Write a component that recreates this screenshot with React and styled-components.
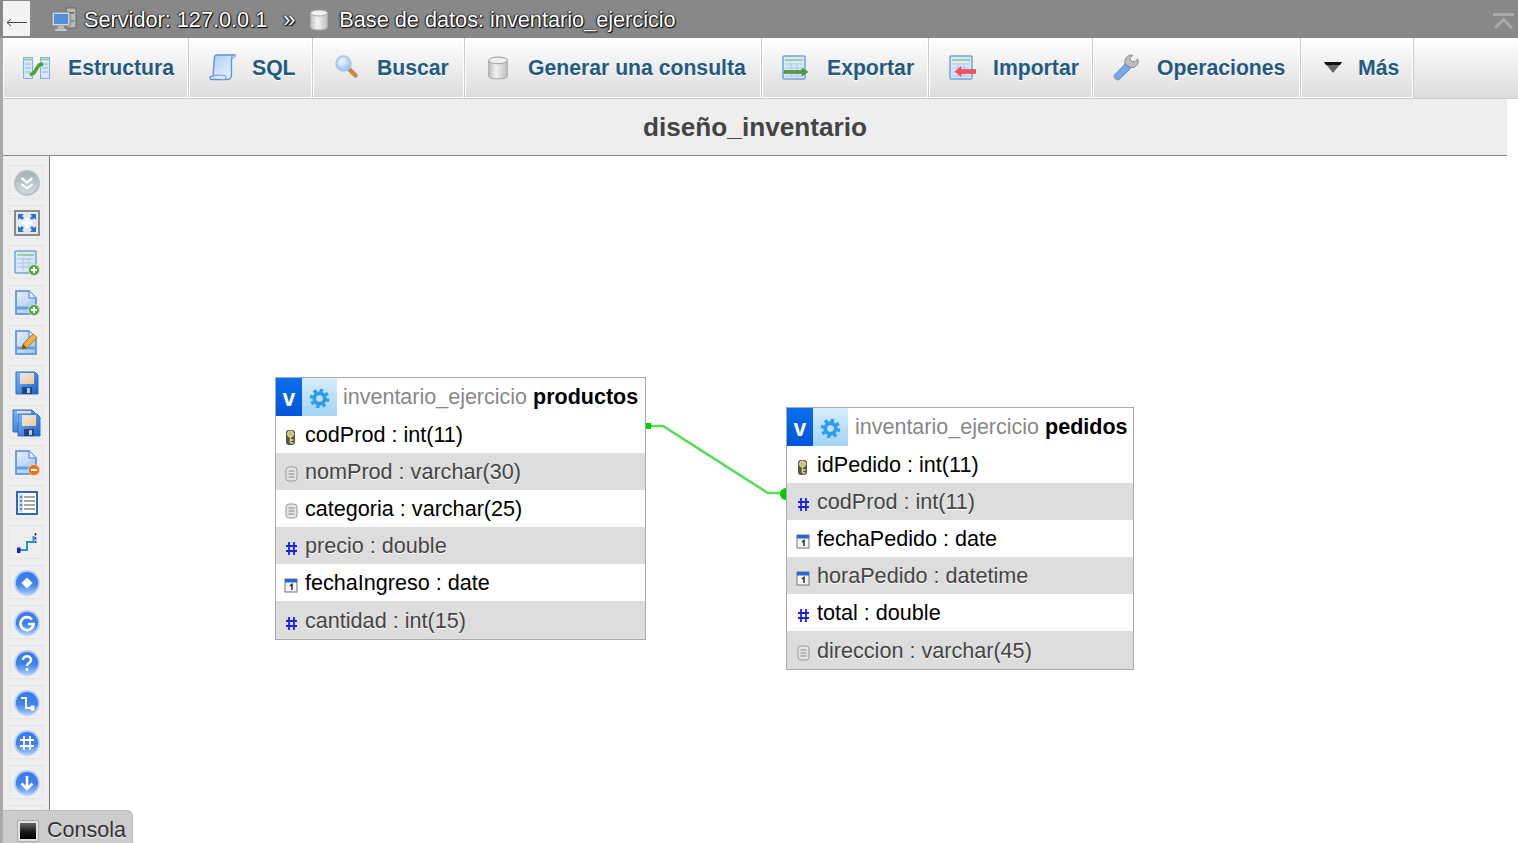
import React from "react";
import styled, { createGlobalStyle } from "styled-components";

const GlobalStyle = createGlobalStyle`
  html, body {
    margin: 0;
    padding: 0;
    height: 100%;
    overflow: hidden;
    background: #fff;
    font-family: "Liberation Sans", Arial, sans-serif;
  }
`;

const Page = styled.div`
  position: relative;
  display: flex;
  flex-direction: column;
  height: 843px;
  overflow: hidden;
`;

const TopBar = styled.div`
  display: flex;
  align-items: center;
  flex: 0 0 38px;
  background: #888;
  color: #fff;
  font-size: 21.7px;
  text-shadow: 1px 1px 1px #000, 0 0 2px #000, -1px 0 1px #333;
  white-space: nowrap;

  svg {
    filter: blur(0.35px);
  }
`;

const BackButton = styled.div`
  flex: 0 0 27px;
  height: 35px;
  margin: 0 21px 1px 3px;
  background: #f3f3f3;
  display: flex;
  align-items: center;
  justify-content: center;
  padding-top: 8px;
  box-sizing: border-box;
`;

const Crumb = styled.span`
  display: flex;
  align-items: center;
  padding-top: 2px;
  margin-left: ${(p) => p.$gap}px;
`;

const Collapse = styled.div`
  margin-left: auto;
  margin-right: 4px;
  padding-top: 4px;
  display: flex;
`;

const Body = styled.div`
  flex: 1;
  display: flex;
  flex-direction: column;
  min-height: 0;
  border-left: 3px solid #aaa;
`;

const TabBar = styled.nav`
  display: flex;
  flex: 0 0 60px;
  height: 60px;
  background: linear-gradient(#fff, #dcdcdc);
  border-bottom: 1px solid #ccc;
`;

const Tab = styled.a`
  display: flex;
  align-items: center;
  box-sizing: border-box;
  flex: 0 0 ${(p) => p.$width}px;
  padding-left: ${(p) => p.$pad}px;
  border-right: 1px solid #ccc;
  border-bottom: 1px solid #fff;
  box-shadow: inset -1px 0 0 #fff, inset 1px 0 0 #fff;
  color: #235a81;
  font-size: 21.2px;
  font-weight: bold;
  text-shadow: 0 1px 0 #fff;
  white-space: nowrap;
`;

const TabIcon = styled.span`
  display: flex;
  flex: 0 0 ${(p) => p.$width}px;

  svg {
    filter: blur(0.4px);
  }
`;

const Heading = styled.h2`
  flex: 0 0 56px;
  width: 1504px;
  margin: 0;
  background: #eee;
  border-bottom: 1px solid #888;
  color: #444;
  font-size: 26.2px;
  line-height: 56px;
  font-weight: bold;
  text-align: center;
`;

const Workspace = styled.div`
  flex: 1;
  display: flex;
  min-height: 0;
`;

const Sidebar = styled.aside`
  flex: 0 0 47px;
  box-sizing: border-box;
  display: flex;
  flex-direction: column;
  align-items: center;
  gap: 6px;
  padding: 9px 0 0 0;
  background: #eee;
  border-right: 1px solid #777;
  overflow: hidden;
`;

const SideButton = styled.div`
  flex: 0 0 34px;
  width: 34px;
  box-sizing: border-box;
  display: flex;
  align-items: center;
  justify-content: center;
  padding: 1px 0 0 1px;
  border: 1px dotted #ddd;

  svg {
    filter: blur(0.45px);
  }
`;

const Canvas = styled.main`
  position: relative;
  flex: 1;
`;

const Relation = styled.svg`
  position: absolute;
  left: 0;
  top: 0;
  width: 100%;
  height: 100%;
`;

const DesignTable = styled.section`
  position: absolute;
  left: ${(p) => p.$x}px;
  top: ${(p) => p.$y}px;
  width: ${(p) => p.$width}px;
  box-sizing: border-box;
  background: #fff;
  border: 1px solid #aaa;
`;

const TableHead = styled.header`
  display: flex;
  align-items: center;
  height: 38px;
  font-size: 21.5px;
  white-space: nowrap;
`;

const SelectAll = styled.span`
  flex: 0 0 26px;
  height: 100%;
  box-sizing: border-box;
  padding-top: 3px;
  background: linear-gradient(#0a6ff0, #0055d8);
  color: #fff;
  font-weight: bold;
  font-size: 23px;
  line-height: 34px;
  text-align: center;
`;

const OptionButton = styled.span`
  flex: 0 0 35px;
  height: 100%;
  display: flex;
  align-items: center;
  justify-content: center;
  padding-top: 2px;
  box-sizing: border-box;
  background: linear-gradient(#d8eefc, #a0d3f6);

  svg {
    filter: blur(0.3px);
  }
`;

const Schema = styled.span`
  margin-left: ${(p) => 6 + p.$indent}px;
  color: #888;
`;

const TableName = styled.b`
  margin-left: 6px;
  color: #000;
`;

const FieldRow = styled.div`
  display: flex;
  align-items: center;
  box-sizing: border-box;
  height: 37px;
  padding-left: ${(p) => 8 + p.$indent}px;
  font-size: 21.6px;
  white-space: nowrap;
  color: #000;

  &:nth-child(even) {
    background: #ddd;
    color: #444;
    text-shadow: 0 1px 0 #fff;
  }

  &:last-child {
    height: 38px;
    padding-top: 1px;
  }
`;

const FieldIcon = styled.span`
  display: flex;
  flex: 0 0 15px;
  margin-right: 6px;
  padding-top: 5px;

  svg {
    filter: blur(0.25px);
  }
`;

const ConsoleTab = styled.div`
  position: absolute;
  left: 3px;
  bottom: 0;
  width: 130px;
  height: 33px;
  box-sizing: border-box;
  display: flex;
  align-items: center;
  padding: 7px 0 0 14px;
  background: #ccc;
  border-top-right-radius: 6px;
  border-top: 1px solid #bbb;
  border-right: 1px solid #bbb;
  color: #333;
  font-size: 21.5px;
  text-shadow: 0 1px 0 #eee;
`;

const ConsoleIcon = styled.span`
  flex: 0 0 22px;
  height: 22px;
  box-sizing: border-box;
  margin-right: 8px;
  border: 3px solid #e4e4e4;
  outline: 1px solid #aaa;
  outline-offset: -1px;
  background: linear-gradient(#666, #111 60%, #000);
`;

function Defs() {
  return (
    <svg width="0" height="0" style={{ position: "absolute" }}>
      <defs>
        <linearGradient id="page" x1="0" y1="0" x2="1" y2="1">
          <stop offset="0" stopColor="#e2eefb" />
          <stop offset="1" stopColor="#9fc4ef" />
        </linearGradient>
        <linearGradient id="scroll" x1="0" y1="0" x2="1" y2="1">
          <stop offset="0" stopColor="#a9cbf2" />
          <stop offset="1" stopColor="#eef5fd" />
        </linearGradient>
        <linearGradient id="drum" x1="0" y1="0" x2="1" y2="0">
          <stop offset="0" stopColor="#bbb" />
          <stop offset="0.4" stopColor="#f4f4f4" />
          <stop offset="1" stopColor="#bdbdbd" />
        </linearGradient>
        <linearGradient id="orb" x1="0" y1="0" x2="0" y2="1">
          <stop offset="0" stopColor="#3a78ea" />
          <stop offset="0.55" stopColor="#3f82ee" />
          <stop offset="1" stopColor="#a6ccfb" />
        </linearGradient>
        <linearGradient id="grayOrb" x1="0" y1="0" x2="0" y2="1">
          <stop offset="0" stopColor="#9fb0b8" />
          <stop offset="1" stopColor="#d5dde0" />
        </linearGradient>
        <linearGradient id="disk" x1="0" y1="0" x2="1" y2="1">
          <stop offset="0" stopColor="#7fb6f2" />
          <stop offset="1" stopColor="#1a5fc8" />
        </linearGradient>
        <linearGradient id="label" x1="0" y1="0" x2="1" y2="1">
          <stop offset="0" stopColor="#dfe9f5" />
          <stop offset="1" stopColor="#f6c98c" />
        </linearGradient>
        <radialGradient id="lens" cx="0.4" cy="0.35" r="0.7">
          <stop offset="0" stopColor="#f2f8ff" />
          <stop offset="1" stopColor="#8fbdee" />
        </radialGradient>
      </defs>
    </svg>
  );
}

/* ---- top bar ---- */

const ServerIcon = () => (
  <svg width="26" height="26" viewBox="0 0 26 26">
    <rect x="15" y="1" width="10" height="20" fill="#b5b9bd" stroke="#666" />
    <rect x="18" y="5" width="5" height="1.5" fill="#666" />
    <rect x="20" y="13" width="3" height="2" fill="#4caf50" />
    <rect x="1" y="5" width="18" height="14" rx="1" fill="#d3d6da" stroke="#777" />
    <rect x="3" y="7" width="14" height="10" fill="#4f8fdc" />
    <path d="M7 19h6l1 3H6z" fill="#bbb" />
    <rect x="4" y="22" width="12" height="2" fill="#ddd" stroke="#888" strokeWidth=".5" />
  </svg>
);

const DrumIcon = ({ size = 20, height = 22 }) => (
  <svg width={size} height={height} viewBox="0 0 20 22">
    <path d="M1.500 4v14c0 1.800 3.800 3 8.500 3s8.500-1.200 8.500-3V4z" fill="url(#drum)" stroke="#aaa" />
    <ellipse cx="10" cy="4" rx="8.500" ry="3" fill="#f1f1f1" stroke="#aaa" />
  </svg>
);

/* ---- tab icons ---- */

const StructureIcon = () => (
  <svg width="27" height="27" viewBox="0 0 27 27">
    <g fill="#d9e8f8" stroke="#7fb0e4">
      <rect x="0.500" y="3.500" width="9" height="21" />
      <rect x="17.500" y="3.500" width="9" height="21" />
    </g>
    <path d="M1 5.500h8M18 5.500h8" stroke="#8cc97f" strokeWidth="1.500" />
    <path d="M2 10h6M2 14h6M2 18h6M19 10h6M19 14h6M19 18h6" stroke="#a7c6ea" strokeWidth="1.500" />
    <path d="M7 21l4-2 5-8 4-1" fill="none" stroke="#4fa32d" strokeWidth="3.500" />
  </svg>
);

const SqlIcon = () => (
  <svg width="27" height="27" viewBox="0 0 27 27">
    <path d="M5.500 2.500C6 1.500 7 1 8 1h17c-1.500 1-2.500 2-2.500 4v15c0 3-1.500 5.500-4 5.500H3c-1.500 0-2.500-1-2-2.500l3-1z" fill="url(#scroll)" stroke="#5e93d4" strokeWidth="1.300" />
    <path d="M1 23.500c2-2.500 12-2.500 15-2 1.500.5 1 3.500-.5 4" fill="#d8e8f9" stroke="#5e93d4" />
    <path d="M22.500 3.500c.5-1.500 3-3.500 3.800-2 .5 1-1 2.500-3.800 3" fill="#cfe2f8" stroke="#5e93d4" />
  </svg>
);

const SearchIcon = () => (
  <svg width="27" height="27" viewBox="0 0 27 27">
    <path d="M14.500 14.500l7 7" stroke="#c08a4a" strokeWidth="4.500" strokeLinecap="round" />
    <circle cx="9.500" cy="9.500" r="7.500" fill="url(#lens)" stroke="#a9c5e6" strokeWidth="1.500" />
  </svg>
);

const TableIcon = ({ children }) => (
  <svg width="27" height="27" viewBox="0 0 27 27">
    <rect x="1" y="2" width="22" height="23" rx="1" fill="#dbe8f8" stroke="#6fa3e0" strokeWidth="1.500" />
    <path d="M3 6h18" stroke="#8bc97b" strokeWidth="1.500" />
    <path d="M3 10h18M3 14h18M3 18h18M3 22h18M9 9v14M15 9v14" stroke="#a9c6ec" />
    {children}
  </svg>
);

const ExportIcon = () => (
  <TableIcon>
    <path d="M2 16.500h18v-2.500l6 4-6 4v-2.500H2z" fill="#4f9e3c" stroke="#3a7f2a" strokeWidth=".5" />
  </TableIcon>
);

const ImportIcon = () => (
  <TableIcon>
    <path d="M27 15.500H12v-3l-6 5 6 5v-3h15z" fill="#f5525a" stroke="#e33" strokeWidth=".5" />
  </TableIcon>
);

const WrenchIcon = () => (
  <svg width="28" height="27" viewBox="0 0 28 27">
    <path d="M1.500 21L13 9l5 5L6 25.500c-2 1.500-6-1.500-4.500-4.500z" fill="#7ba6e4" stroke="#5c8ad0" />
    <path d="M12 10c-1-4 1-8 5.500-9 1.200-.2 2 .2 2 .2l-2.500 3.300 1.500 3 3.500.3 2.500-3c1 1.500 1 3.500 0 5.500-1.500 2.800-5 4-8 2.700z" fill="#bdbdbd" stroke="#8c8c8c" />
  </svg>
);

const CaretIcon = () => (
  <svg width="18" height="11" viewBox="0 0 18 11">
    <path d="M0 0h18l-9 11z" fill="#666" />
    <path d="M0 0h18l-2 3H2z" fill="#111" />
  </svg>
);

/* ---- sidebar icons ---- */

const Orb = ({ children, gray }) => (
  <svg width="26" height="26" viewBox="0 0 26 26">
    <circle cx="13" cy="13" r="12" fill={gray ? "url(#grayOrb)" : "url(#orb)"} stroke={gray ? "#b3bfc4" : "#b4cdf0"} strokeWidth="1.800" />
    <g fill="none" stroke="#fff" strokeWidth="2.200">{children}</g>
  </svg>
);

const PageShape = ({ children }) => (
  <svg width="26" height="26" viewBox="0 0 26 26">
    <path d="M2 1h13l7 7v16H2z" fill="url(#page)" stroke="#4f88d2" strokeWidth="1.500" />
    <path d="M15 1v7h7" fill="#dce9f9" stroke="#4f88d2" />
    <path d="M3 18h18" stroke="#5ea3e6" strokeWidth="3" />
    {children}
  </svg>
);

const PlusBadge = () => (
  <g>
    <circle cx="20" cy="20" r="5.500" fill="#4fa840" stroke="#cfe8c8" />
    <path d="M17 20h6M20 17v6" stroke="#fff" strokeWidth="2" />
  </g>
);

const Floppy = () => (
  <g>
    <path d="M1 1h19l3 3v19H1z" fill="url(#disk)" stroke="#2a6fce" />
    <rect x="5" y="2" width="14" height="11" fill="url(#label)" />
    <rect x="7" y="16" width="10" height="7" fill="#1d4580" />
    <rect x="12" y="17" width="3" height="5" fill="#b7c7dc" />
  </g>
);

const sideIcons = [
  <Orb gray>
    <path d="M7.500 8l5.500 4.500L18.500 8M7.500 14l5.500 4.500L18.500 14" />
  </Orb>,
  <svg width="26" height="26" viewBox="0 0 26 26">
    <rect x="1" y="1" width="24" height="24" fill="#e3eaf4" stroke="#8a8a8a" strokeWidth="2" />
    <path d="M8 13h10M13 8v10" stroke="#fff" strokeWidth="3" />
    <path d="M4 4h6L8 6l2 2-2 2-2-2-2 2z" fill="#2f74c4" />
    <path d="M22 4h-6l2 2-2 2 2 2 2-2 2 2z" fill="#2f74c4" />
    <path d="M4 22h6l-2-2 2-2-2-2-2 2-2-2z" fill="#2f74c4" />
    <path d="M22 22h-6l2-2-2-2 2-2 2 2 2-2z" fill="#2f74c4" />
  </svg>,
  <svg width="26" height="26" viewBox="0 0 26 26">
    <rect x="1" y="1" width="21" height="22" rx="1" fill="#dbe8f8" stroke="#6fa3e0" strokeWidth="1.500" />
    <path d="M3 5h17" stroke="#8bc97b" strokeWidth="1.500" />
    <path d="M3 9h17M3 13h17M3 17h17M9 8v13M15 8v13" stroke="#a9c6ec" />
    <PlusBadge />
  </svg>,
  <PageShape>
    <PlusBadge />
  </PageShape>,
  <PageShape>
    <path d="M8 19l1-5L19 4l4 3.500L13 18z" fill="#f0b040" stroke="#b77a20" />
    <path d="M8 19l1-5 4 4z" fill="#7c4a20" />
  </PageShape>,
  <svg width="24" height="24" viewBox="0 0 24 24">
    <Floppy />
  </svg>,
  <svg width="30" height="28" viewBox="0 0 30 28">
    <Floppy />
    <g transform="translate(5 4)">
      <Floppy />
    </g>
  </svg>,
  <PageShape>
    <circle cx="20" cy="20" r="5.500" fill="#e8701e" stroke="#f5c9a8" />
    <path d="M17 20h6" stroke="#fff" strokeWidth="2" />
  </PageShape>,
  <svg width="22" height="24" viewBox="0 0 22 24">
    <rect x="1" y="1" width="20" height="22" fill="#fff" stroke="#3268b8" strokeWidth="2" />
    <path d="M3 3h4v18H3z" fill="#c7daf3" />
    <path d="M8 6h11M8 10h11M8 14h11M8 18h11" stroke="#888" strokeWidth="1.500" />
    <path d="M4 6h2M4 10h2M4 14h2M4 18h2" stroke="#2f6fd0" strokeWidth="1.500" />
  </svg>,
  <svg width="22" height="22" viewBox="0 0 22 22">
    <path d="M3 18h8v-8h6.500V4" fill="none" stroke="#2a93c9" strokeWidth="2" />
    <rect x="1" y="15.500" width="3.500" height="5.500" fill="#1c22c0" />
    <path d="M19.500 1v2.500M19.500 5v2.500M19.500 9v2" stroke="#1c22c0" strokeWidth="1.600" />
  </svg>,
  <Orb>
    <path d="M13 8.500l4.500 4.500-4.500 4.500L8.500 13z" fill="#fff" strokeWidth="1.500" />
  </Orb>,
  <Orb>
    <path d="M18 9.500A6.500 6.500 0 1 0 19.500 14H14" strokeWidth="2.600" />
  </Orb>,
  <Orb>
    <path d="M9 10c0-5 8-5 8 0 0 3-4 3-4 6" strokeWidth="2.600" />
    <path d="M13 18v3" strokeWidth="2.600" />
  </Orb>,
  <Orb>
    <path d="M7 8h5v10h5" strokeWidth="2" />
    <path d="M17 16h3v4h-3z" fill="#fff" strokeWidth="1" />
  </Orb>,
  <Orb>
    <path d="M10 6v14M16 6v14M6 10h14M6 16h14" strokeWidth="1.800" />
  </Orb>,
  <Orb>
    <path d="M13 6v13M7.500 13.500l5.500 5.500 5.500-5.500" strokeWidth="2.600" />
  </Orb>,
  <Orb />,
];

/* ---- field icons ---- */

const KeyIcon = () => (
  <svg width="13" height="17" viewBox="0 0 13 17">
    <rect x="2" y="1" width="9" height="15" rx="3" fill="#555" />
    <circle cx="6.500" cy="5" r="3" fill="#c9c46a" stroke="#e8e49a" />
    <path d="M6.500 7v7M6.500 11h3M6.500 14h3" stroke="#e4d860" strokeWidth="1.500" />
  </svg>
);

const TextIcon = () => (
  <svg width="14" height="16" viewBox="0 0 14 16">
    <rect x="2" y="1" width="11" height="14" rx="3" fill="#e4e4e4" stroke="#999" />
    <path d="M4.500 5h6M4.500 8h6M4.500 11h6" stroke="#888" />
  </svg>
);

const NumberIcon = () => (
  <svg width="14" height="16" viewBox="0 0 14 16">
    <path d="M5 2v13M10 2v13M2 6h11M2 11h11" stroke="#1a22e8" strokeWidth="1.800" />
  </svg>
);

const DateIcon = () => (
  <svg width="14" height="15" viewBox="0 0 14 15">
    <rect x="1" y="1" width="12" height="13" fill="#f4f4f4" stroke="#777" />
    <rect x="1" y="1" width="12" height="3.500" fill="#2468d8" />
    <path d="M6 8l2-1.500V12" fill="none" stroke="#222" strokeWidth="1.400" />
  </svg>
);

const GearIcon = () => (
  <svg width="21" height="21" viewBox="0 0 22 22">
    <circle cx="11" cy="11" r="8.500" fill="none" stroke="#2b9cf2" strokeWidth="3.500" strokeDasharray="3.400 3.270" />
    <circle cx="11" cy="11" r="5.500" fill="none" stroke="#2b9cf2" strokeWidth="4" />
    <circle cx="11" cy="11" r="3" fill="#bfe2fa" />
  </svg>
);

const fieldIcons = {
  key: KeyIcon,
  text: TextIcon,
  number: NumberIcon,
  date: DateIcon,
};

const tabs = [
  { label: "Estructura", icon: StructureIcon, width: 186, pad: 20, iconWidth: 45 },
  { label: "SQL", icon: SqlIcon, width: 124, pad: 20, iconWidth: 43 },
  { label: "Buscar", icon: SearchIcon, width: 152, pad: 21, iconWidth: 43 },
  { label: "Generar una consulta", icon: () => <DrumIcon size={22} height={24} />, width: 297, pad: 22, iconWidth: 41 },
  { label: "Exportar", icon: ExportIcon, width: 167, pad: 20, iconWidth: 45 },
  { label: "Importar", icon: ImportIcon, width: 164, pad: 20, iconWidth: 44 },
  { label: "Operaciones", icon: WrenchIcon, width: 208, pad: 20, iconWidth: 44 },
  { label: "Más", icon: CaretIcon, width: 113, pad: 23, iconWidth: 34 },
];

const designTables = [
  {
    name: "productos",
    x: 225,
    y: 221,
    width: 371,
    indent: 0,
    fields: [
      ["key", "codProd : int(11)"],
      ["text", "nomProd : varchar(30)"],
      ["text", "categoria : varchar(25)"],
      ["number", "precio : double"],
      ["date", "fechaIngreso : date"],
      ["number", "cantidad : int(15)"],
    ],
  },
  {
    name: "pedidos",
    x: 736,
    y: 251,
    width: 348,
    indent: 1,
    fields: [
      ["key", "idPedido : int(11)"],
      ["number", "codProd : int(11)"],
      ["date", "fechaPedido : date"],
      ["date", "horaPedido : datetime"],
      ["number", "total : double"],
      ["text", "direccion : varchar(45)"],
    ],
  },
];

export default function App() {
  return (
    <Page>
      <GlobalStyle />
      <Defs />
      <TopBar>
        <BackButton>
          <svg width="21" height="9" viewBox="0 0 21 9">
            <path d="M1 4.500h20M5 1L1 4.500 5 8" fill="none" stroke="#444" />
          </svg>
        </BackButton>
        <Crumb $gap={0}>
          <ServerIcon />
        </Crumb>
        <Crumb $gap={7}>Servidor: 127.0.0.1</Crumb>
        <Crumb $gap={16}>»</Crumb>
        <Crumb $gap={14}>
          <DrumIcon />
        </Crumb>
        <Crumb $gap={10}>Base de datos: inventario_ejercicio</Crumb>
        <Collapse>
          <svg width="21" height="17" viewBox="0 0 21 17">
            <path d="M0 1.500h21M2 15l8.500-8.500L19 15" fill="none" stroke="#aaa" strokeWidth="3" />
          </svg>
        </Collapse>
      </TopBar>
      <Body>
        <TabBar>
          {tabs.map((tab) => (
            <Tab key={tab.label} $width={tab.width} $pad={tab.pad}>
              <TabIcon $width={tab.iconWidth}>
                <tab.icon />
              </TabIcon>
              {tab.label}
            </Tab>
          ))}
        </TabBar>
        <Heading>diseño_inventario</Heading>
        <Workspace>
          <Sidebar>
            {sideIcons.map((icon, i) => (
              <SideButton key={i}>{icon}</SideButton>
            ))}
          </Sidebar>
          <Canvas>
            <Relation>
              <path d="M601 270h12l105 67h14" fill="none" stroke="#55dd55" strokeWidth="2.500" />
              <rect x="595" y="267" width="6" height="6" fill="#0c0" />
              <circle cx="736" cy="338" r="6" fill="#0c0" />
            </Relation>
            {designTables.map((table) => (
              <DesignTable key={table.name} $x={table.x} $y={table.y} $width={table.width}>
                <TableHead>
                  <SelectAll>v</SelectAll>
                  <OptionButton>
                    <GearIcon />
                  </OptionButton>
                  <Schema $indent={table.indent}>inventario_ejercicio</Schema>
                  <TableName>{table.name}</TableName>
                </TableHead>
                <div>
                  {table.fields.map(([kind, text]) => {
                    const Icon = fieldIcons[kind];
                    return (
                      <FieldRow key={text} $indent={table.indent}>
                        <FieldIcon>
                          <Icon />
                        </FieldIcon>
                        {text}
                      </FieldRow>
                    );
                  })}
                </div>
              </DesignTable>
            ))}
          </Canvas>
        </Workspace>
      </Body>
      <ConsoleTab>
        <ConsoleIcon />
        Consola
      </ConsoleTab>
    </Page>
  );
}
